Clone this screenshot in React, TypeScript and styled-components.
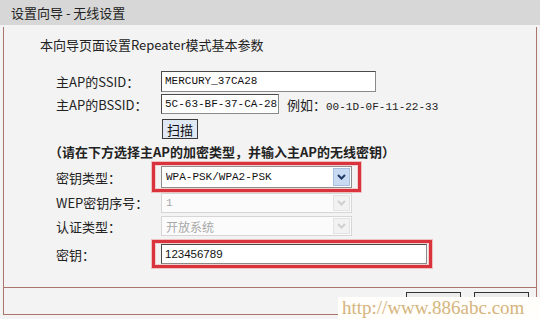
import React from "react";
import styled, { createGlobalStyle } from "styled-components";

const Global = createGlobalStyle`
  html, body { margin: 0; padding: 0; background: #f3f3f3; }
  body { font-family: "Noto Sans CJK SC", "Noto Sans", sans-serif; }
`;

const CJK = `"Noto Sans CJK SC", "Noto Sans", sans-serif`;
const MONO = `"Liberation Mono", "Noto Sans CJK SC", monospace`;
const BORDER = "#a9756c";

const Screen = styled.div`
  position: relative;
  width: 540px;
  height: 319px;
  overflow: hidden;
  background: #f3f3f3;
`;

const TitleBar = styled.div`
  height: 25px;
  background: #d7d7d7;
  display: flex;
  align-items: center;
  padding-left: 11px;
  font-family: ${CJK};
  font-size: 13px;
  color: #222;
  white-space: pre;
`;

const Panel = styled.div`
  margin: 2px 3px 0 3px;
  border-left: 1px solid ${BORDER};
  border-right: 1px solid ${BORDER};
  border-bottom: 1px solid ${BORDER};
  background: #f3f3f3;
`;

const FormArea = styled.div`
  height: 260px;
  border-bottom: 1px solid ${BORDER};
  display: flex;
  flex-direction: column;
`;

const Heading = styled.div`
  margin-top: 10px;
  padding-left: 36px;
  height: 16px;
  line-height: 16px;
  font-family: ${CJK};
  font-size: 13px;
  color: #222;
`;

const Row = styled.div<{ $mt: number; $h: number }>`
  margin-top: ${(p) => p.$mt}px;
  height: ${(p) => p.$h}px;
  display: flex;
  align-items: center;
  padding-left: 52px;
`;

const Label = styled.div`
  width: 105px;
  flex: none;
  font-family: ${CJK};
  font-size: 13px;
  color: #222;
  white-space: nowrap;
`;

const Note = styled.div<{ $mt: number; $h: number }>`
  margin-top: ${(p) => p.$mt}px;
  height: ${(p) => p.$h}px;
  line-height: ${(p) => p.$h}px;
  padding-left: 45px;
  font-family: ${CJK};
  font-size: 13px;
  font-weight: bold;
  color: #222;
  white-space: nowrap;
  text-spacing-trim: space-all;
`;

const TextBox = styled.div<{ $w: number; $h: number; $sans?: boolean }>`
  width: ${(p) => p.$w}px;
  height: ${(p) => p.$h}px;
  box-sizing: border-box;
  border: 1px solid #4a4a4a;
  border-right-color: #8a8a8a;
  border-bottom-color: #8a8a8a;
  background: #fff;
  display: flex;
  align-items: center;
  padding-left: 3px;
  font-family: ${(p) => (p.$sans ? `"Liberation Sans", Arial, sans-serif` : MONO)};
  font-size: ${(p) => (p.$sans ? "11.5px" : "11px")};
  color: #111;
  white-space: nowrap;
  overflow: hidden;
`;

const Example = styled.div`
  margin-left: 8px;
  font-family: ${MONO};
  font-size: 11px;
  color: #222;
  white-space: nowrap;
  span { font-family: ${CJK}; font-size: 13px; }
`;

const ScanButton = styled.div`
  margin-left: 1px;
  width: 36px;
  height: 20px;
  box-sizing: border-box;
  border: 1px solid #3a3a3a;
  background: #dfe8f3;
  display: flex;
  align-items: center;
  justify-content: center;
  font-family: ${CJK};
  font-size: 13px;
  color: #111;
`;

const Highlight = styled.div<{ $pr: number }>`
  margin-left: -9px;
  box-sizing: border-box;
  height: 100%;
  border: 3px solid #d9343e;
  box-shadow: 0 0 0 1px rgba(235, 130, 130, 0.45), inset 0 0 0 1px rgba(240, 170, 170, 0.5);
  padding: 0 ${(p) => p.$pr}px 0 6px;
  display: flex;
  align-items: center;
`;

const SelectBox = styled.div<{ $w: number; $h: number; $disabled?: boolean }>`
  width: ${(p) => p.$w}px;
  height: ${(p) => p.$h}px;
  box-sizing: border-box;
  border: 1px solid ${(p) => (p.$disabled ? "#d6d6d6" : "#8e8e8e")};
  background: ${(p) => (p.$disabled ? "#fbfbfb" : "#fff")};
  display: flex;
  align-items: center;
  padding-left: 4px;
  font-family: ${MONO};
  font-size: 11px;
  color: ${(p) => (p.$disabled ? "#a8a8a8" : "#111")};
  white-space: nowrap;
`;

const SelectText = styled.div<{ $cjk?: boolean }>`
  flex: 1;
  font-family: ${(p) => (p.$cjk ? CJK : MONO)};
  font-size: ${(p) => (p.$cjk ? "12px" : "11px")};
`;

const ArrowBox = styled.div<{ $disabled?: boolean }>`
  width: 17px;
  height: calc(100% - 2px);
  margin-right: 1px;
  box-sizing: border-box;
  border: 1px solid ${(p) => (p.$disabled ? "#e2e2e2" : "#a8bfdd")};
  background: ${(p) => (p.$disabled ? "#f2f2f2" : "#c9dbf2")};
  display: flex;
  align-items: center;
  justify-content: center;
`;

const Chevron = ({ disabled }: { disabled?: boolean }) => (
  <svg width="9" height="6" viewBox="0 0 9 6">
    <polyline
      points="1,1 4.5,4.5 8,1"
      fill="none"
      stroke={disabled ? "#cfcfcf" : "#1f3a66"}
      strokeWidth="2"
    />
  </svg>
);

const ButtonRow = styled.div`
  height: 26px;
  display: flex;
  justify-content: flex-end;
  align-items: flex-start;
  gap: 13px;
  padding: 4px 7px 0 0;
  box-sizing: border-box;
`;

const NavButton = styled.div`
  width: 55px;
  height: 22px;
  box-sizing: border-box;
  border: 1px solid #333;
  background: #ececec;
  display: flex;
  align-items: center;
  justify-content: center;
  font-family: ${CJK};
  font-size: 13px;
  color: #111;
`;

const Watermark = styled.div`
  position: absolute;
  right: 0;
  bottom: 0;
  width: 202px;
  height: 22px;
  background: #fffefa;
  display: flex;
  align-items: center;
  padding-left: 4px;
  box-sizing: border-box;
  font-family: "Liberation Serif", "Times New Roman", serif;
  font-size: 19px;
  color: #d5b47e;
  white-space: nowrap;
`;

export default function App() {
  return (
    <>
      <Global />
      <Screen>
        <TitleBar>设置向导 - 无线设置</TitleBar>
        <Panel>
          <FormArea>
            <Heading>本向导页面设置Repeater模式基本参数</Heading>
            <Row $mt={17} $h={22}>
              <Label>主AP的SSID：</Label>
              <TextBox $w={215} $h={21}>MERCURY_37CA28</TextBox>
            </Row>
            <Row $mt={1} $h={22}>
              <Label>主AP的BSSID：</Label>
              <TextBox $w={118} $h={20}>5C-63-BF-37-CA-28</TextBox>
              <Example>
                <span>例如：</span>00-1D-0F-11-22-33
              </Example>
            </Row>
            <Row $mt={3} $h={22}>
              <Label />
              <ScanButton>扫描</ScanButton>
            </Row>
            <Note $mt={1} $h={21}>（请在下方选择主AP的加密类型，并输入主AP的无线密钥）</Note>
            <Row $mt={0} $h={30}>
              <Label>密钥类型：</Label>
              <Highlight $pr={6}>
                <SelectBox $w={191} $h={22}>
                  <SelectText>WPA-PSK/WPA2-PSK</SelectText>
                  <ArrowBox>
                    <Chevron />
                  </ArrowBox>
                </SelectBox>
              </Highlight>
            </Row>
            <Row $mt={0} $h={21}>
              <Label>WEP密钥序号：</Label>
              <SelectBox $w={191} $h={20} $disabled>
                <SelectText>1</SelectText>
                <ArrowBox $disabled>
                  <Chevron disabled />
                </ArrowBox>
              </SelectBox>
            </Row>
            <Row $mt={2} $h={22}>
              <Label>认证类型：</Label>
              <SelectBox $w={191} $h={20} $disabled>
                <SelectText $cjk>开放系统</SelectText>
                <ArrowBox $disabled>
                  <Chevron disabled />
                </ArrowBox>
              </SelectBox>
            </Row>
            <Row $mt={3} $h={28}>
              <Label>密钥：</Label>
              <Highlight $pr={2}>
                <TextBox $w={266} $h={20} $sans>
                  123456789
                </TextBox>
              </Highlight>
            </Row>
          </FormArea>
          <ButtonRow>
            <NavButton>上一步</NavButton>
            <NavButton>下一步</NavButton>
          </ButtonRow>
        </Panel>
        <Watermark>http://www.886abc.com</Watermark>
      </Screen>
    </>
  );
}
